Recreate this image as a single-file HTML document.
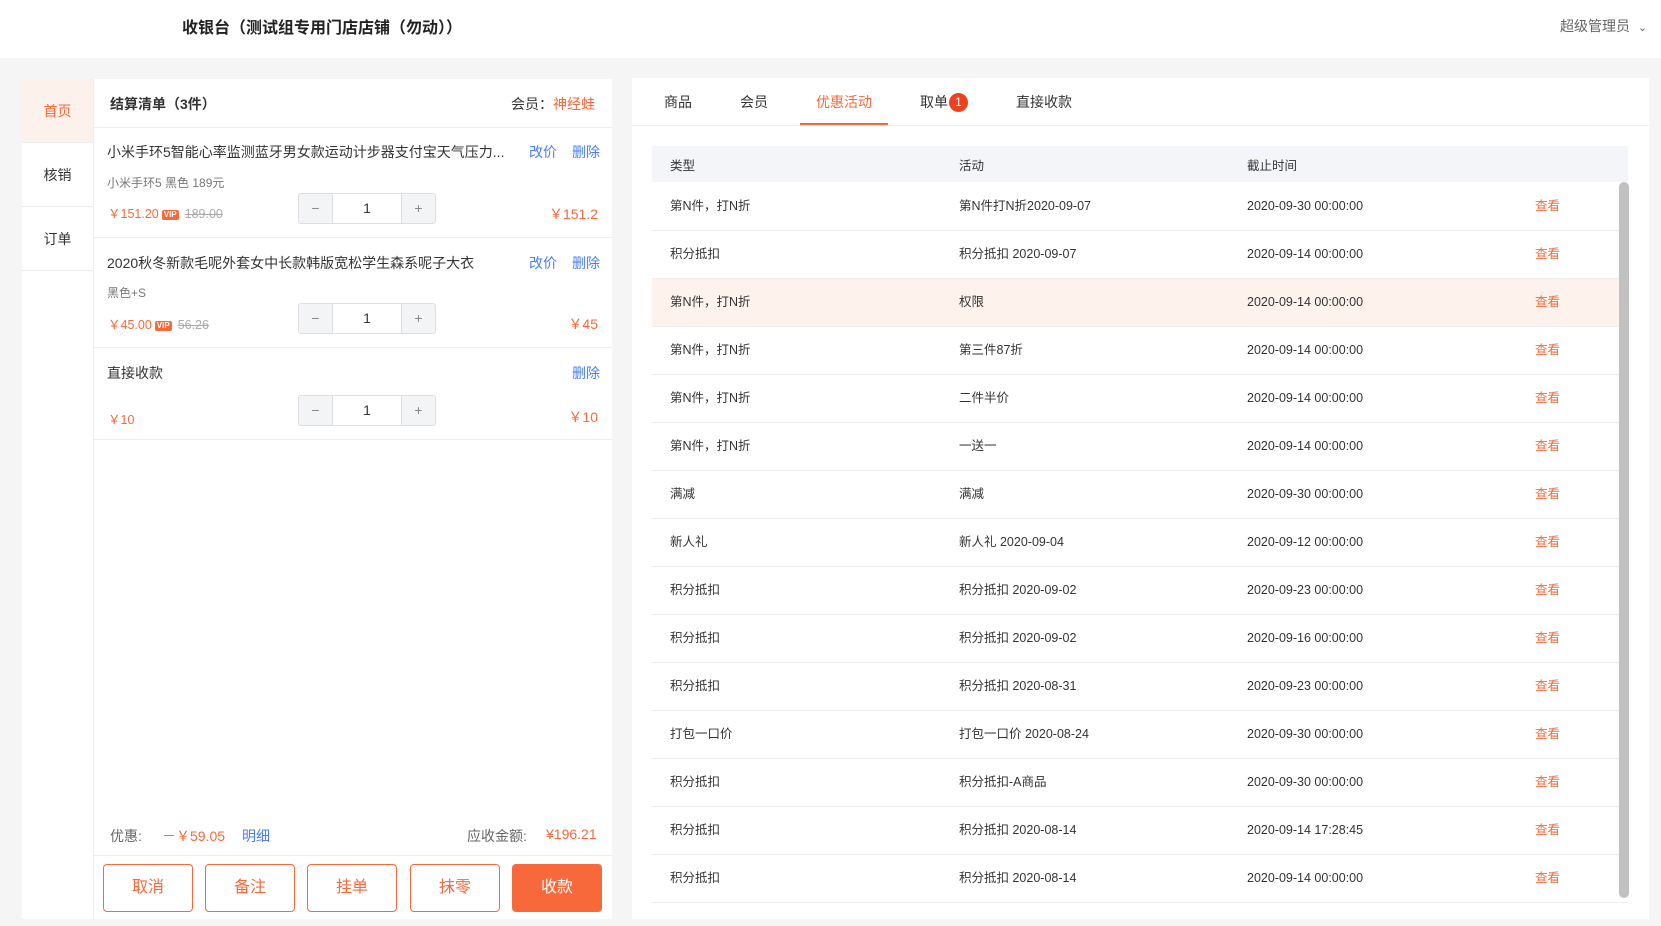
<!DOCTYPE html>
<html><head><meta charset="utf-8">
<style>
*{margin:0;padding:0;box-sizing:border-box}
body{width:1661px;height:926px;background:#f5f5f5;font-family:"Liberation Sans","Noto Sans CJK SC",sans-serif;color:#333;position:relative;overflow:hidden;font-size:13px}
.abs{position:absolute}
.hdr{left:0;top:0;width:1661px;height:58px;background:#fff}
.or{color:#f7693b}
.bl{color:#4a7dfa}
.side{left:22px;top:79px;width:72px;height:840px;background:#fff;border-right:1px solid #eee}
.side div{height:64px;line-height:64px;text-align:center;font-size:14px;border-bottom:1px solid #eee}
.cart{left:94px;top:79px;width:518px;height:840px;background:#fff}
.item{position:absolute;left:0;width:518px;border-bottom:1px solid #eee}
.step{position:absolute;left:204px;width:138px;height:31px;border:1px solid #dcdee2;border-radius:3px;display:flex;background:#f3f4f6}
.step span{width:33px;text-align:center;line-height:29px;color:#888;font-size:14px}
.step b{flex:1;background:#fff;border-left:1px solid #dcdee2;border-right:1px solid #dcdee2;text-align:center;line-height:29px;font-weight:normal;font-size:14px}
.vip{display:inline-block;background:#f7693b;color:#fff;font-size:8px;font-weight:bold;padding:0 2px;line-height:10px;border-radius:2px;vertical-align:1px;margin:0 6px 0 3px}
.s{color:#aaa;text-decoration:line-through}
.btn{position:absolute;top:785px;width:90px;height:48px;border:1px solid #f7693b;border-radius:4px;color:#f7693b;text-align:center;line-height:46px;font-size:16px}
.right{left:632px;top:78px;width:1017px;height:841px;background:#fff}
.tabs{height:48px;border-bottom:1px solid #eee;position:relative;font-size:14px}
.tabs span{position:absolute;top:0;line-height:48px}
table{position:absolute;left:20px;top:68px;width:976px;border-collapse:collapse;font-size:12.5px;table-layout:fixed}
th{height:36px;background:#f4f5f9;font-weight:normal;text-align:left;color:#333;vertical-align:middle}
td{height:48px;border-bottom:1px solid #eee;vertical-align:middle;line-height:16px}
th:first-child,td:first-child{padding-left:18px;width:307px}
th:nth-child(2),td:nth-child(2){width:288px}
th:nth-child(3),td:nth-child(3){width:288px}
tr.hl td{background:#fdf2ec}
</style></head><body>
<div class="abs hdr"></div>
<div class="abs" style="left:182px;top:14px;font-size:16px;font-weight:bold;color:#222">收银台（测试组专用门店店铺（勿动））</div>
<div class="abs" style="left:1560px;top:16px;font-size:14px;color:#666">超级管理员 <span style="font-size:11px;margin-left:4px">&#8964;</span></div>

<div class="abs side"><div class="or" style="background:#fdf1ec">首页</div><div>核销</div><div>订单</div></div>

<div class="abs cart">
 <div class="item" style="top:0;height:49px"><span class="abs" style="left:16px;top:15px;font-size:14px;font-weight:bold">结算清单（3件）</span><span class="abs" style="right:17px;top:15px;font-size:14px">会员：<span class="or">神经蛙</span></span></div>
 <div class="item" style="top:49px;height:110px">
  <span class="abs" style="left:13px;top:14px;font-size:14px">小米手环5智能心率监测蓝牙男女款运动计步器支付宝天气压力...</span>
  <span class="abs bl" style="left:435px;top:14px;font-size:14px">改价</span><span class="abs bl" style="left:478px;top:14px;font-size:14px">删除</span>
  <span class="abs" style="left:13px;top:46px;font-size:12px;color:#777">小米手环5 黑色 189元</span>
  <span class="abs" style="left:14px;top:75px;font-size:12.5px"><span class="or">￥151.20</span><span class="vip">VIP</span><span class="s">189.00</span></span>
  <div class="step" style="top:65px"><span>−</span><b>1</b><span>+</span></div>
  <span class="abs or" style="right:14px;top:76px;font-size:14px">￥151.2</span>
 </div>
 <div class="item" style="top:159px;height:110px">
  <span class="abs" style="left:13px;top:15px;font-size:14px">2020秋冬新款毛呢外套女中长款韩版宽松学生森系呢子大衣</span>
  <span class="abs bl" style="left:435px;top:15px;font-size:14px">改价</span><span class="abs bl" style="left:478px;top:15px;font-size:14px">删除</span>
  <span class="abs" style="left:13px;top:46px;font-size:12px;color:#777">黑色+S</span>
  <span class="abs" style="left:14px;top:76px;font-size:12.5px"><span class="or">￥45.00</span><span class="vip">VIP</span><span class="s">56.26</span></span>
  <div class="step" style="top:65px"><span>−</span><b>1</b><span>+</span></div>
  <span class="abs or" style="right:14px;top:76px;font-size:14px">￥45</span>
 </div>
 <div class="item" style="top:269px;height:92px">
  <span class="abs" style="left:13px;top:15px;font-size:14px">直接收款</span>
  <span class="abs bl" style="left:478px;top:15px;font-size:14px">删除</span>
  <span class="abs or" style="left:14px;top:61px;font-size:12.5px">￥10</span>
  <div class="step" style="top:47px"><span>−</span><b>1</b><span>+</span></div>
  <span class="abs or" style="right:14px;top:59px;font-size:14px">￥10</span>
 </div>
 <div class="abs" style="left:16px;top:747px;font-size:14px;color:#666">优惠:</div>
 <div class="abs or" style="left:68px;top:747px;font-size:14px">－￥59.05</div>
 <div class="abs bl" style="left:148px;top:747px;font-size:14px">明细</div>
 <div class="abs" style="left:373px;top:747px;font-size:14px;color:#666">应收金额:</div>
 <div class="abs or" style="left:452px;top:747px;font-size:14px">¥196.21</div>
 <div class="abs" style="left:0;top:776px;width:518px;border-top:1px solid #eee"></div>
 <div class="btn" style="left:9px">取消</div>
 <div class="btn" style="left:111px">备注</div>
 <div class="btn" style="left:213px">挂单</div>
 <div class="btn" style="left:316px">抹零</div>
 <div class="btn" style="left:418px;background:#f7693b;color:#fff">收款</div>
</div>

<div class="abs right">
 <div class="tabs">
  <span style="left:32px">商品</span><span style="left:108px">会员</span>
  <span class="or" style="left:184px">优惠活动</span>
  <div class="abs" style="left:168px;top:45px;width:88px;height:2px;background:#f7693b"></div>
  <span style="left:288px">取单</span>
  <div class="abs" style="left:317px;top:15px;width:19px;height:19px;border-radius:50%;background:#f0411e;color:#fff;font-size:12px;text-align:center;line-height:19px">1</div>
  <span style="left:384px">直接收款</span>
 </div>
 <table>
  <tr><th>类型</th><th>活动</th><th>截止时间</th><th></th></tr>
  <tr><td>第N件，打N折</td><td>第N件打N折2020-09-07</td><td>2020-09-30 00:00:00</td><td class="or">查看</td></tr>
  <tr><td>积分抵扣</td><td>积分抵扣 2020-09-07</td><td>2020-09-14 00:00:00</td><td class="or">查看</td></tr>
  <tr class="hl"><td>第N件，打N折</td><td>权限</td><td>2020-09-14 00:00:00</td><td class="or">查看</td></tr>
  <tr><td>第N件，打N折</td><td>第三件87折</td><td>2020-09-14 00:00:00</td><td class="or">查看</td></tr>
  <tr><td>第N件，打N折</td><td>二件半价</td><td>2020-09-14 00:00:00</td><td class="or">查看</td></tr>
  <tr><td>第N件，打N折</td><td>一送一</td><td>2020-09-14 00:00:00</td><td class="or">查看</td></tr>
  <tr><td>满减</td><td>满减</td><td>2020-09-30 00:00:00</td><td class="or">查看</td></tr>
  <tr><td>新人礼</td><td>新人礼 2020-09-04</td><td>2020-09-12 00:00:00</td><td class="or">查看</td></tr>
  <tr><td>积分抵扣</td><td>积分抵扣 2020-09-02</td><td>2020-09-23 00:00:00</td><td class="or">查看</td></tr>
  <tr><td>积分抵扣</td><td>积分抵扣 2020-09-02</td><td>2020-09-16 00:00:00</td><td class="or">查看</td></tr>
  <tr><td>积分抵扣</td><td>积分抵扣 2020-08-31</td><td>2020-09-23 00:00:00</td><td class="or">查看</td></tr>
  <tr><td>打包一口价</td><td>打包一口价 2020-08-24</td><td>2020-09-30 00:00:00</td><td class="or">查看</td></tr>
  <tr><td>积分抵扣</td><td>积分抵扣-A商品</td><td>2020-09-30 00:00:00</td><td class="or">查看</td></tr>
  <tr><td>积分抵扣</td><td>积分抵扣 2020-08-14</td><td>2020-09-14 17:28:45</td><td class="or">查看</td></tr>
  <tr><td>积分抵扣</td><td>积分抵扣 2020-08-14</td><td>2020-09-14 00:00:00</td><td class="or">查看</td></tr>
 </table>
 <div class="abs" style="left:987px;top:104px;width:10px;height:716px;border-radius:5px;background:#c1c1c1"></div>
</div>
</body></html>
